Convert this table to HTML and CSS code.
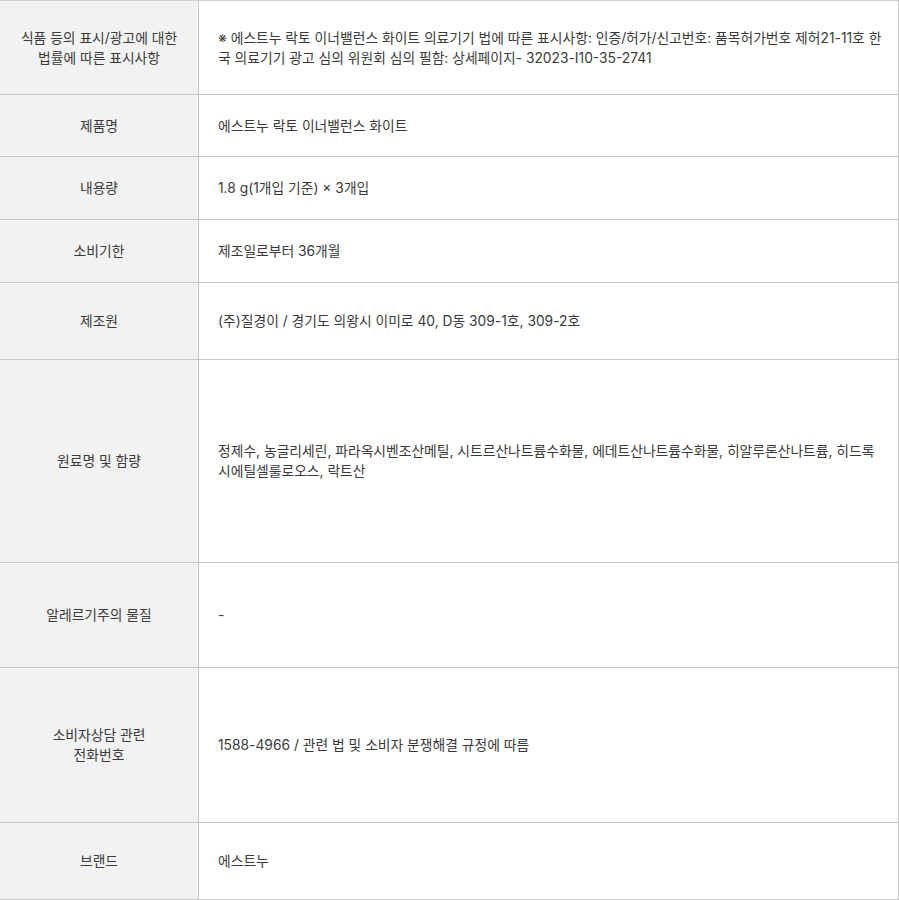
FILE: index.html
```html
<!DOCTYPE html>
<html lang="ko">
<head>
<meta charset="utf-8">
<title>상품정보 제공고시</title>
<link rel="stylesheet" href="styles.css">
</head>
<body>
<div class="info-table">
  <div class="row h94">
    <div class="label">식품 등의 표시/광고에 대한<br>법률에 따른 표시사항</div>
    <div class="value">※ 에스트누 락토 이너밸런스 화이트 의료기기 법에 따른 표시사항: 인증/허가/신고번호: 품목허가번호 제허21-11호 한국 의료기기 광고 심의 위원회 심의 필함: 상세페이지- 32023-I10-35-2741</div>
  </div>
  <div class="row h62">
    <div class="label">제품명</div>
    <div class="value">에스트누 락토 이너밸런스 화이트</div>
  </div>
  <div class="row h63">
    <div class="label">내용량</div>
    <div class="value">1.8 g(1개입 기준) × 3개입</div>
  </div>
  <div class="row h63">
    <div class="label">소비기한</div>
    <div class="value">제조일로부터 36개월</div>
  </div>
  <div class="row h77">
    <div class="label">제조원</div>
    <div class="value">(주)질경이 / 경기도 의왕시 이미로 40, D동 309-1호, 309-2호</div>
  </div>
  <div class="row h203">
    <div class="label">원료명 및 함량</div>
    <div class="value">정제수, 농글리세린, 파라옥시벤조산메틸, 시트르산나트륨수화물, 에데트산나트륨수화물, 히알루론산나트륨, 히드록시에틸셀룰로오스, 락트산</div>
  </div>
  <div class="row h105">
    <div class="label">알레르기주의 물질</div>
    <div class="value">-</div>
  </div>
  <div class="row h155">
    <div class="label">소비자상담 관련<br>전화번호</div>
    <div class="value">1588-4966 / 관련 법 및 소비자 분쟁해결 규정에 따름</div>
  </div>
  <div class="row h77">
    <div class="label">브랜드</div>
    <div class="value">에스트누</div>
  </div>
</div>
</body>
</html>
```

FILE: styles.css
```css
html, body {
  margin: 0;
  padding: 0;
  background: #ffffff;
}
body {
  font-family: Inter, "Noto Sans CJK KR", "Noto Sans", sans-serif;
  font-size: 13.8px;
  line-height: 20px;
  color: #333333;
}
.info-table {
  width: 898px;
  border-top: 1px solid #d0d0d0;
  border-right: 1px solid #c4c4c4;
}
.row {
  display: grid;
  grid-template-columns: 199px 1fr;
  border-bottom: 1px solid #c8c8c8;
  box-sizing: border-box;
}
.h94 { height: 94px; }
.h62 { height: 62px; }
.h63 { height: 63px; }
.h77 { height: 77px; }
.h203 { height: 203px; }
.h105 { height: 105px; }
.h155 { height: 155px; }
.label {
  background: #f2f2f2;
  border-right: 1px solid #c4c4c4;
  display: flex;
  align-items: center;
  justify-content: center;
  text-align: center;
  color: #3a3a3a;
  padding: 0 10px;
}
.value {
  display: flex;
  align-items: center;
  padding: 0 14px 0 19px;
  color: #3a3a3a;
  word-break: break-all;
}
```
